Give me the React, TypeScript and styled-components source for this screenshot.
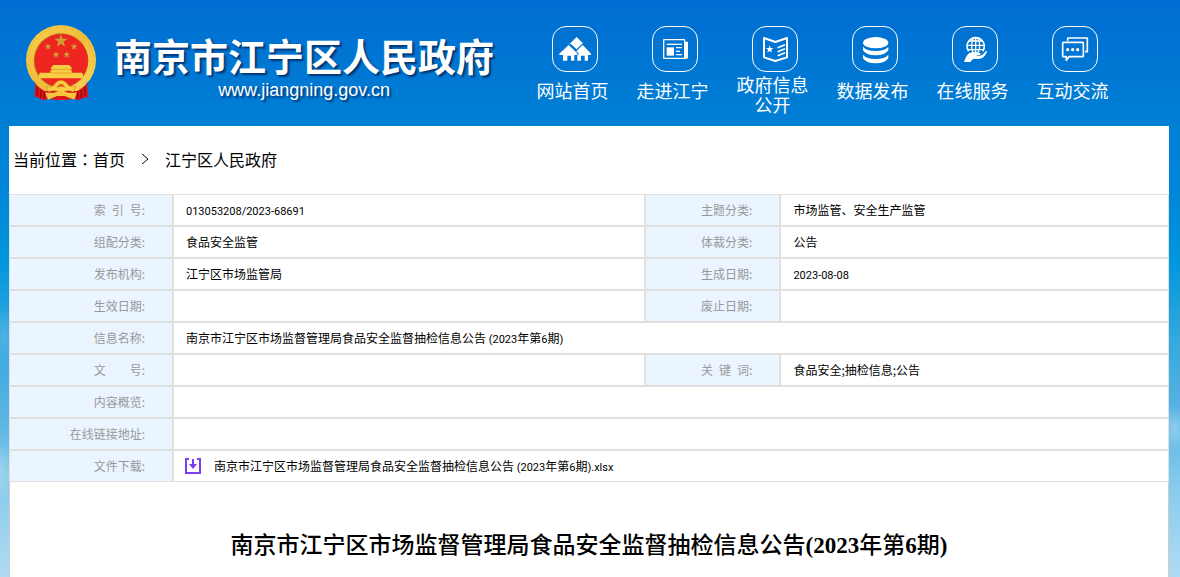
import React from 'react';
import styled, { createGlobalStyle } from 'styled-components';

const GlobalStyle = createGlobalStyle`
  * { box-sizing: border-box; }
  body {
    margin: 0;
    background: #bcdff4;
    color: #000;
    font-family: 'Noto Sans CJK SC', sans-serif;
  }
  a { color: inherit; text-decoration: none; }
`;

const Page = styled.div`
  min-height: 100vh;
  display: flex;
  flex-direction: column;
  padding: 0 11px 0 9px;
  background:
    radial-gradient(ellipse 12px 30px at 4px 335px, rgba(255, 255, 255, 0.14), transparent),
    radial-gradient(ellipse 16px 30px at 0 470px, rgba(255, 255, 255, 0.25), transparent),
    radial-gradient(ellipse 16px 22px at calc(100% - 6px) 428px, rgba(255, 255, 255, 0.3), transparent),
    linear-gradient(
      180deg,
      #006dd2 0,
      #0076d3 60px,
      #0080d5 126px,
      #0086d8 190px,
      #0096dc 260px,
      #35a8df 340px,
      #5cb5e3 420px,
      #8accec 490px,
      #b0daf2 577px
    );
`;

const Header = styled.header`
  display: flex;
  justify-content: space-between;
  height: 126px;
  padding: 25px 44px 0 17px;
`;

const Brand = styled.a`
  display: flex;
  gap: 18px;
  color: #fff;
  text-shadow: 2px 2px 2px rgba(0, 30, 80, 0.75);
`;

const BrandText = styled.div`
  display: flex;
  flex-direction: column;
  align-items: center;
  padding-top: 5px;
`;

const BrandName = styled.h1`
  margin: 0;
  font-size: 38px;
  font-weight: 700;
  line-height: 50px;
  white-space: nowrap;
`;

const BrandUrl = styled.span`
  font: 18px/20px 'Liberation Sans', sans-serif;
`;

const Nav = styled.nav`
  display: flex;
`;

const NavItem = styled.a`
  display: flex;
  flex-direction: column;
  align-items: center;
  width: 100px;
  padding-top: 1px;
  color: #fff;
`;

const NavLabel = styled.span<{ $wrapped?: boolean }>`
  width: 77px;
  margin-top: ${(p) => (p.$wrapped ? 2 : 8)}px;
  padding-right: 5px;
  font-size: 18px;
  line-height: 20px;
  text-align: center;
`;

const IconFrame = styled.span`
  width: 46px;
  height: 46px;
  border: 1px solid #fff;
  border-radius: 14px;
  color: #fff;

  svg {
    display: block;
    width: 44px;
    height: 44px;
  }
`;

const Main = styled.main`
  flex: 1;
  background: #fff;
`;

const Breadcrumb = styled.nav`
  display: flex;
  align-items: center;
  height: 68px;
  padding: 0 4px 2px;
  font-size: 16px;
  line-height: 24px;
`;

const CrumbColon = styled.span`
  font-family: 'Noto Sans CJK TC', sans-serif;
`;

const CrumbArrow = styled.svg`
  width: 8px;
  height: 12px;
  margin: 0 16px;
`;

const InfoTable = styled.table`
  width: 100%;
  table-layout: fixed;
  border-collapse: separate;
  border-spacing: 0;
  font-size: 12px;
  line-height: 18px;
`;

const Col = styled.col<{ $width?: string }>`
  width: ${(p) => p.$width ?? 'auto'};
`;

const LabelCell = styled.th`
  height: 32px;
  padding: 0 27px 0 0;
  border: 1px solid #e0e0e0;
  background: #eaf5ff;
  color: #999;
  font-weight: 400;
  text-align: right;
  white-space: nowrap;
`;

const ValueCell = styled.td`
  height: 32px;
  padding: 0 12px;
  border: 1px solid #e0e0e0;
`;

const Latin = styled.span`
  font-family: Roboto, sans-serif;
  font-size: 11px;
  line-height: 12px;
`;

const FileLink = styled.a`
  display: flex;
  align-items: center;
  gap: 13px;

  svg {
    width: 16px;
    height: 16px;
    margin-left: -1px;
  }
`;

const Article = styled.article`
  min-height: 95px;
  padding: 48px 20px 16px;
  border: solid #ccc;
  border-width: 0 1px;
`;

const ArticleTitle = styled.h2`
  margin: 0;
  font-family: 'Liberation Serif', 'Noto Sans CJK SC', serif;
  font-size: 23px;
  font-weight: 500;
  line-height: 32px;
  text-align: center;

  b {
    font-weight: 700;
  }
`;

const star = (cx: number, cy: number, r: number) =>
  Array.from({ length: 10 }, (_, i) => {
    const a = (Math.PI / 5) * i - Math.PI / 2;
    const d = i % 2 ? r * 0.4 : r;
    return `${(cx + d * Math.cos(a)).toFixed(1)},${(cy + d * Math.sin(a)).toFixed(1)}`;
  }).join(' ');

const Emblem = () => (
  <svg width="70" height="76" viewBox="0 0 210 228" aria-hidden="true">
    <defs>
      <linearGradient id="gold" x1="0" y1="0" x2="1" y2="1">
        <stop offset="0" stopColor="#f7cf4c" />
        <stop offset="0.5" stopColor="#f0bc3a" />
        <stop offset="1" stopColor="#fadb5a" />
      </linearGradient>
      <clipPath id="ringClip">
        <path d="M0 0 H210 V150 L184 172 L166 198 H44 L26 172 L0 150Z" />
      </clipPath>
    </defs>
    <path d="M28 158 H182 L184 190 L187 216 L170 220 L158 225 L140 222 H70 L52 225 L40 220 L25 214 L27 190Z" fill="#d8141c" />
    <path d="M34 186 L33 214 M44 196 L44 220 M56 200 L54 222 M176 186 L177 214 M166 196 L166 220 M154 200 L156 222" stroke="#98060c" strokeWidth="4" fill="none" />
    <circle cx="105" cy="105" r="105" fill="url(#gold)" clipPath="url(#ringClip)" />
    <circle cx="105" cy="105" r="98" fill="none" stroke="#dfa42f" strokeWidth="3" strokeDasharray="9 6" opacity="0.4" clipPath="url(#ringClip)" />
    <circle cx="105" cy="107" r="82" fill="#b8791c" />
    <circle cx="106" cy="107" r="80" fill="#ee2520" />
    <g fill="#cf9f30">
      <polygon points={star(105, 48, 21)} />
      <polygon points={star(66, 65, 11)} />
      <polygon points={star(144, 65, 11)} />
      <polygon points={star(90, 89, 11)} />
      <polygon points={star(122, 89, 11)} />
    </g>
    <path d="M82 120 H130 L138 130 L134 136 H137 V143 H168 Q174 150 172 160 H38 Q36 150 42 143 H73 V136 H78 L74 130Z" fill="#f8cf42" />
    <path d="M76 133 H136 M74 144 H138" stroke="#dc8b20" strokeWidth="2" />
    <path d="M60 184 Q80 190 88 174 Q105 158 122 174 Q130 190 150 184 L142 200 Q122 192 105 204 Q88 192 68 200Z" fill="#f8cf42" stroke="#d98a20" strokeWidth="2" />
    <path d="M92 188 Q98 176 105 176 Q112 176 118 188 Q105 182 92 188Z" fill="#e2601c" />
    <path d="M57 202 Q80 206 92 200 Q105 192 118 200 Q130 206 153 202 L145 224 L118 214 Q105 220 92 214 L66 224Z" fill="#f5c53c" />
    <path d="M80 225 L94 213 H116 L130 225Z" fill="#d8141c" />
  </svg>
);

const HomeIcon = () => (
  <svg viewBox="3 3 132 132" fill="currentColor" aria-hidden="true">
    <path d="M74 33 L98 57 L92 52 L74 70 L56 53 L50 56Z" />
    <path d="M50 57 L77 83 L74 87 H67 V104 H57 V89 H46 V104 H33 V87 H23 L21 84Z" />
    <path d="M92 57 L118 84 L115 87 H108 V104 H98 V89 H87 V104 H76 V88 L81 83 L73 76Z" />
  </svg>
);

const NewsIcon = () => (
  <svg viewBox="3 3 132 132" fill="none" stroke="currentColor" aria-hidden="true">
    <rect x="35" y="41" width="63" height="56" rx="2" strokeWidth="4" />
    <path d="M98 47 H108 V94 Q108 99 102 99 H98Z" fill="currentColor" stroke="none" />
    <path d="M44 55 H90" strokeWidth="4" />
    <path d="M44 64 H66 V89 H44Z" fill="currentColor" stroke="none" />
    <path d="M72 65 H90 M72 76 H84 M72 86 H90" strokeWidth="4" />
  </svg>
);

const OpenInfoIcon = () => (
  <svg viewBox="3 3 132 132" fill="none" stroke="currentColor" aria-hidden="true">
    <path d="M36 36 L70 48 L105 36 V94 L70 105 L36 94Z" strokeWidth="6" strokeLinejoin="round" />
    <polygon points={star(53, 70, 12)} fill="currentColor" stroke="none" />
    <path d="M77 65 L99 56 M77 77 L99 68 M77 89 L99 80" strokeWidth="5" />
  </svg>
);

const DataIcon = () => (
  <svg viewBox="3 3 132 132" fill="currentColor" aria-hidden="true">
    <ellipse cx="71" cy="50" rx="38" ry="17" />
    <path d="M33 62 Q44 75 71 75 Q98 75 109 62 V73 Q100 88 71 88 Q42 88 33 73Z" />
    <path d="M33 86 Q44 99 71 99 Q98 99 109 86 V97 Q100 112 71 112 Q42 112 33 97Z" />
  </svg>
);

const ServiceIcon = () => (
  <svg viewBox="3 3 132 132" fill="none" stroke="currentColor" aria-hidden="true">
    <path d="M50 76 A26 26 0 1 1 92 76" strokeWidth="5" />
    <ellipse cx="71" cy="59" rx="12" ry="25" strokeWidth="4" />
    <path d="M71 33 V78 M45 58 H97 M50 45 H92 M49 71 H93" strokeWidth="4" />
    <path
      d="M36 108 Q42 90 51 82 Q62 76 74 79 L85 81 Q88 86 80 88 L72 89 Q88 92 96 82 Q100 75 106 75 Q102 88 92 95 Q82 101 66 98 Q58 100 56 108Z"
      fill="currentColor"
      stroke="none"
    />
  </svg>
);

const ChatIcon = () => (
  <svg viewBox="3 3 132 132" fill="none" stroke="currentColor" aria-hidden="true">
    <path d="M47 44 V36 H106 V77 H99" strokeWidth="5" strokeLinejoin="round" />
    <path d="M34 49 H92 Q94 49 94 51 V90 Q94 92 92 92 H51 L43 103 V92 H34 Q32 92 32 90 V51 Q32 49 34 49Z" strokeWidth="5" strokeLinejoin="round" />
    <g fill="currentColor" stroke="none">
      <circle cx="47" cy="71" r="5" />
      <circle cx="62" cy="71" r="5" />
      <circle cx="77" cy="71" r="5" />
    </g>
  </svg>
);

const DownloadIcon = () => (
  <svg viewBox="0 0 16 16" fill="none" stroke="#7b3ff2" strokeWidth="2" aria-hidden="true">
    <path d="M4 1 H1 V15 H15 V1 H12" />
    <path d="M8 1 V8" />
    <path d="M4 6 H12 L8 11Z" fill="#7b3ff2" stroke="none" />
  </svg>
);

const navItems = [
  { label: '网站首页', Icon: HomeIcon },
  { label: '走进江宁', Icon: NewsIcon },
  { label: '政府信息公开', Icon: OpenInfoIcon, wrapped: true },
  { label: '数据发布', Icon: DataIcon },
  { label: '在线服务', Icon: ServiceIcon },
  { label: '互动交流', Icon: ChatIcon },
];

type Field = { label: string; value?: React.ReactNode };

const rows: Field[][] = [
  [
    { label: '索\u2002引\u2002号', value: <Latin>013053208/2023-68691</Latin> },
    { label: '主题分类', value: '市场监管、安全生产监管' },
  ],
  [
    { label: '组配分类', value: '食品安全监管' },
    { label: '体裁分类', value: '公告' },
  ],
  [
    { label: '发布机构', value: '江宁区市场监管局' },
    { label: '生成日期', value: <Latin>2023-08-08</Latin> },
  ],
  [{ label: '生效日期' }, { label: '废止日期' }],
  [
    {
      label: '信息名称',
      value: (
        <>
          南京市江宁区市场监督管理局食品安全监督抽检信息公告 <Latin>(2023</Latin>年第<Latin>6</Latin>期<Latin>)</Latin>
        </>
      ),
    },
  ],
  [
    { label: '文\u3000\u3000号' },
    { label: '关\u2002键\u2002词', value: '食品安全;抽检信息;公告' },
  ],
  [{ label: '内容概览' }],
  [{ label: '在线链接地址' }],
  [
    {
      label: '文件下载',
      value: (
        <FileLink href="#file">
          <DownloadIcon />
          <span>
            南京市江宁区市场监督管理局食品安全监督抽检信息公告 <Latin>(2023</Latin>年第<Latin>6</Latin>期<Latin>).xlsx</Latin>
          </span>
        </FileLink>
      ),
    },
  ],
];

export default function App() {
  return (
    <Page>
      <GlobalStyle />
      <Header>
        <Brand href="#home">
          <Emblem />
          <BrandText>
            <BrandName>南京市江宁区人民政府</BrandName>
            <BrandUrl>www.jiangning.gov.cn</BrandUrl>
          </BrandText>
        </Brand>
        <Nav>
          {navItems.map(({ label, Icon, wrapped }) => (
            <NavItem key={label} href="#nav">
              <IconFrame>
                <Icon />
              </IconFrame>
              <NavLabel $wrapped={wrapped}>{label}</NavLabel>
            </NavItem>
          ))}
        </Nav>
      </Header>
      <Main>
        <Breadcrumb>
          <span>当前位置</span>
          <CrumbColon>：</CrumbColon>
          <a href="#home">首页</a>
          <CrumbArrow viewBox="0 0 8 12" fill="none" stroke="#000" aria-hidden="true">
            <path d="M1 1 L7 6 L1 11" />
          </CrumbArrow>
          <a href="#gov">江宁区人民政府</a>
        </Breadcrumb>
        <InfoTable>
          <colgroup>
            <Col $width="164px" />
            <Col />
            <Col $width="135px" />
            <Col $width="33.5%" />
          </colgroup>
          <tbody>
            {rows.map((fields) => (
              <tr key={fields[0].label}>
                {fields.map(({ label, value }) => (
                  <React.Fragment key={label}>
                    <LabelCell scope="row">{label}:</LabelCell>
                    <ValueCell colSpan={fields.length === 1 ? 3 : 1}>{value}</ValueCell>
                  </React.Fragment>
                ))}
              </tr>
            ))}
          </tbody>
        </InfoTable>
        <Article>
          <ArticleTitle>
            南京市江宁区市场监督管理局食品安全监督抽检信息公告<b>(2023</b>年第<b>6</b>期<b>)</b>
          </ArticleTitle>
        </Article>
      </Main>
    </Page>
  );
}
